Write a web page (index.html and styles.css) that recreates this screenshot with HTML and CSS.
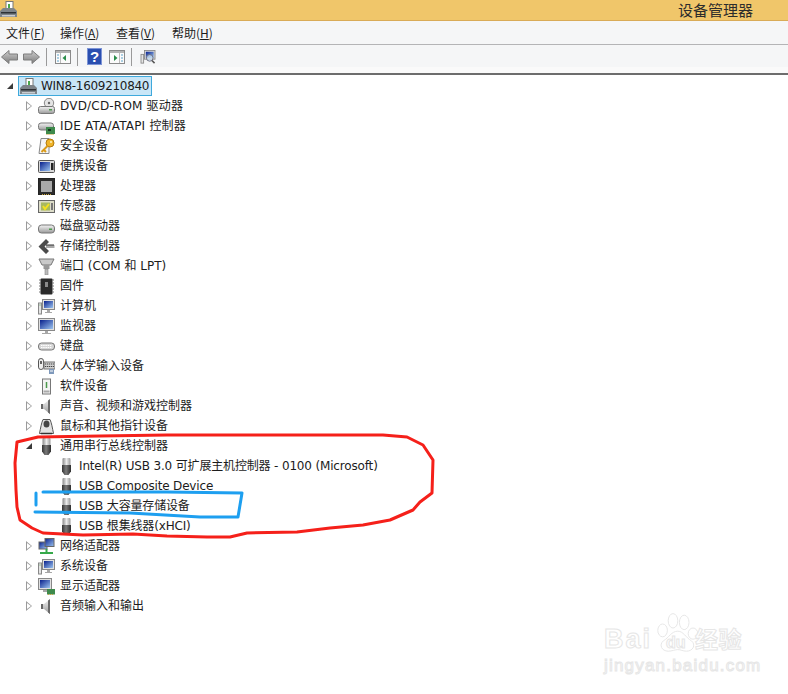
FILE: index.html
```html
<!DOCTYPE html>
<html lang="zh-CN">
<head>
<meta charset="utf-8">
<title>设备管理器</title>
<link rel="stylesheet" href="styles.css">
</head>
<body>
<svg class="defs" width="0" height="0" aria-hidden="true">
  <defs>
    <linearGradient id="metal" x1="0" y1="0" x2="0" y2="1"><stop offset="0" stop-color="#f4f4f4"/><stop offset="1" stop-color="#9a9a9a"/></linearGradient>
    <linearGradient id="arrow" x1="0" y1="0" x2="0" y2="1"><stop offset="0" stop-color="#cfcfcf"/><stop offset="1" stop-color="#7c7c7c"/></linearGradient>
    <linearGradient id="plug" x1="0" y1="0" x2="1" y2="0"><stop offset="0" stop-color="#8a8a8a"/><stop offset=".5" stop-color="#ececec"/><stop offset="1" stop-color="#9a9a9a"/></linearGradient>
    <linearGradient id="body" x1="0" y1="0" x2="1" y2="0"><stop offset="0" stop-color="#333"/><stop offset=".45" stop-color="#7a7a7a"/><stop offset="1" stop-color="#2e2e2e"/></linearGradient>
    <linearGradient id="screen" x1="0" y1="0" x2="1" y2="1"><stop offset="0" stop-color="#08208c"/><stop offset="1" stop-color="#9cc4f0"/></linearGradient>
    <symbol id="i-root" viewBox="0 0 17 17"><rect x="6" y="0.5" width="7" height="9" fill="#fff" stroke="#777"/><path d="M9 3v5" stroke="#4aa84a" stroke-width="2"/><path d="M3 7h11l3 3v6H0v-6z" fill="#7d8489"/><rect x="1" y="11" width="15" height="1.5" fill="#2d3236"/><rect x="2" y="14" width="13" height="1.5" fill="#c8ccd0"/></symbol>
    <symbol id="i-dvd" viewBox="0 0 17 17"><circle cx="11" cy="5" r="4.7" fill="#e4e4e4" stroke="#888"/><circle cx="11" cy="5" r="1.2" fill="#666"/><rect x="0.5" y="8.5" width="16" height="7" rx="2" fill="url(#metal)" stroke="#777"/><rect x="11" y="11" width="3" height="1.5" fill="#4c9a4c"/></symbol>
    <symbol id="i-ide" viewBox="0 0 17 17"><rect x="0.5" y="5" width="15" height="7" rx="2.5" fill="url(#metal)" stroke="#777"/><rect x="8" y="9" width="9" height="7" fill="#3e8a4c"/><path d="M9 16v1M11 16v1M13 16v1M15 16v1" stroke="#c9a53c"/><rect x="10" y="11" width="3" height="2" fill="#173a20"/></symbol>
    <symbol id="i-key" viewBox="0 0 17 17"><path d="M3 .5h8v15H1z" fill="#f4f4f4" stroke="#888"/><circle cx="12" cy="5" r="4" fill="#f0b428" stroke="#b07a10"/><circle cx="13" cy="4" r="1" fill="#fff2c0"/><path d="M10 7.500 3.500 14M6 12l2 2" stroke="#d99a18" stroke-width="2"/></symbol>
    <symbol id="i-portable" viewBox="0 0 17 17"><rect x="0.500" y="2.500" width="16" height="12" rx="1" fill="#d8d8d8" stroke="#555"/><rect x="2" y="4" width="10" height="9" fill="url(#screen)"/><rect x="13" y="5" width="2.500" height="7" fill="#222"/></symbol>
    <symbol id="i-cpu" viewBox="0 0 17 17"><rect x="0.500" y="0.500" width="16" height="16" fill="#2c2c2c" stroke="#222"/><rect x="3" y="3" width="11" height="11" fill="#a9a9a9"/><path d="M4 16.500h9" stroke="#c9a53c" stroke-dasharray="1 1"/></symbol>
    <symbol id="i-sensor" viewBox="0 0 17 17"><rect x="0.500" y="2.500" width="16" height="12" fill="#dcdcc8" stroke="#666"/><rect x="3" y="4.500" width="9" height="8" fill="#a8b860"/><path d="M5 8l2 3 4-5" stroke="#f2e020" stroke-width="2" fill="none"/><path d="M14 5v7" stroke="#777" stroke-width="2"/></symbol>
    <symbol id="i-disk" viewBox="0 0 17 17"><rect x="0.500" y="7" width="16" height="8" rx="3" fill="url(#metal)" stroke="#777"/><rect x="11" y="10.500" width="3" height="1.500" fill="#4c9a4c"/></symbol>
    <symbol id="i-storage" viewBox="0 0 17 17"><path d="M8 1 0.500 8.500 8 16l3-3-4.500-4.500L11 4z" fill="#4b4b4b"/><path d="M8 7h8.500v3H8z" fill="#a8a8a8"/><path d="M8 7h8" stroke="#333"/></symbol>
    <symbol id="i-port" viewBox="0 0 17 17"><path d="M1 1h15l-3 6H4z" fill="#c9c9c9" stroke="#777"/><rect x="5.500" y="7" width="6" height="4" fill="#999"/><rect x="7" y="11" width="3" height="6" fill="#bbb" stroke="#888" stroke-width=".6"/></symbol>
    <symbol id="i-firmware" viewBox="0 0 17 17"><rect x="2.500" y="0.500" width="12" height="16" rx="1" fill="#2a2a2a"/><path d="M1 2h2M1 5h2M1 8h2M1 11h2M1 14h2M14 2h2M14 5h2M14 8h2M14 11h2M14 14h2" stroke="#777"/><rect x="7" y="4" width="3" height="5" fill="#8a8a8a"/></symbol>
    <symbol id="i-computer" viewBox="0 0 17 17"><rect x="0.500" y="5" width="3" height="11" fill="#e4e4e4" stroke="#888"/><path d="M1.500 7h1" stroke="#4c9a4c"/><rect x="4.500" y="1.500" width="12" height="10" fill="#e0e0e0" stroke="#888"/><rect x="6" y="3" width="9" height="7" fill="url(#screen)"/><path d="M9 12h3v2h2v1H7v-1h2z" fill="#a8a8a8"/></symbol>
    <symbol id="i-monitor" viewBox="0 0 17 17"><rect x="0.500" y="0.500" width="16" height="12" fill="#e0e0e0" stroke="#888"/><rect x="2" y="2" width="13" height="9" fill="url(#screen)"/><path d="M7 13h3v2h3v1H4v-1h3z" fill="#a8a8a8"/></symbol>
    <symbol id="i-keyboard" viewBox="0 0 17 17"><rect x="0.500" y="5" width="16" height="7" rx="3" fill="#d6d6d6" stroke="#777"/><path d="M3 7.500h11M3 9.500h11" stroke="#fff" stroke-dasharray="1.500 .7"/></symbol>
    <symbol id="i-hid" viewBox="0 0 17 17"><rect x="0.500" y="0.500" width="5" height="11" rx="2.400" fill="#eee" stroke="#555"/><path d="M3 3v3" stroke="#333" stroke-width="1.500"/><rect x="6" y="4" width="11" height="7" fill="#d0d0d0" stroke="#777"/><path d="M7 6h9M7 8.500h9" stroke="#444" stroke-dasharray="1.300 .7"/><path d="M11 11h5v5h-5z" fill="#7f99bb"/><path d="M12 13h3" stroke="#fff"/></symbol>
    <symbol id="i-soft" viewBox="0 0 17 17"><rect x="4.500" y="1" width="8" height="15" fill="#f4f4f4" stroke="#777"/><path d="M8.500 4v6" stroke="#4c9a4c" stroke-width="1.500"/><rect x="5.500" y="12.500" width="6" height="2" fill="#aaa"/></symbol>
    <symbol id="i-sound" viewBox="0 0 17 17"><path d="M3 6h3l6-5v15L6 11H3z" fill="url(#metal)"/><path d="M10 2.500v12l2 1.500V1z" fill="#6a6a6a"/><rect x="3" y="6" width="2" height="5" fill="#666"/></symbol>
    <symbol id="i-mouse" viewBox="0 0 17 17"><path d="M5 1.500h7c1.500 3 2.500 9 3.500 14h-14c1-5 2-11 3.500-14z" fill="#e2e2e2" stroke="#555"/><ellipse cx="8.500" cy="6" rx="3" ry="3.500" fill="#444"/><path d="M3 15.500h11" stroke="#333" stroke-width="1.500"/></symbol>
    <symbol id="i-usb" viewBox="0 0 17 17"><path d="M4.500 1q0-1 1-1h6q1 0 1 1v6h-8z" fill="url(#plug)"/><path d="M4 7h9v6.500L10.500 17h-4L4 13.500z" fill="url(#body)"/></symbol>
    <symbol id="i-net" viewBox="0 0 17 17"><rect x="1" y="4" width="8" height="7" fill="url(#screen)" stroke="#666"/><rect x="7" y="0.500" width="9" height="8" fill="url(#screen)" stroke="#666"/><path d="M8.500 11v3M2 15h13" stroke="#36a94a" stroke-width="2"/></symbol>
    <symbol id="i-display" viewBox="0 0 17 17"><rect x="0.500" y="0.500" width="13" height="11" fill="#e0e0e0" stroke="#888"/><rect x="2" y="2" width="10" height="8" fill="url(#screen)"/><path d="M5 12h4v2H5z" fill="#a8a8a8"/><rect x="9" y="11" width="8" height="5.500" fill="#3e8a4c"/><path d="M10 16.500h6" stroke="#c9a53c" stroke-dasharray="1 1"/></symbol>
    <symbol id="i-back" viewBox="0 0 17 16"><path d="M.5 8 8 1.500V5h8.500v6H8v3.500z" fill="url(#arrow)" stroke="#7d7d7d"/></symbol>
    <symbol id="i-forward" viewBox="0 0 17 16"><path d="M16.500 8 9 1.500V5H.5v6H9v3.500z" fill="url(#arrow)" stroke="#7d7d7d"/></symbol>
    <symbol id="i-win-left" viewBox="0 0 16 14"><rect x="0.500" y="0.500" width="15" height="13" fill="#fbfbfb" stroke="#8a8a8a"/><rect x="1" y="1" width="14" height="2" fill="#b3b3b3"/><path d="M5.500 3v10" stroke="#bbb"/><path d="M2 5h2M2 8h2M2 11h2" stroke="#5fa3c9"/><path d="M11 5v6L7.500 8z" fill="#2b8c4a"/></symbol>
    <symbol id="i-win-right" viewBox="0 0 16 14"><rect x="0.500" y="0.500" width="15" height="13" fill="#fbfbfb" stroke="#8a8a8a"/><rect x="1" y="1" width="14" height="2" fill="#b3b3b3"/><path d="M10.500 3v10" stroke="#bbb"/><path d="M12 5h2M12 8h2M12 11h2" stroke="#5fa3c9"/><path d="M5 5v6L8.500 8z" fill="#2b8c4a"/></symbol>
    <symbol id="i-scan" viewBox="0 0 17 16"><rect x="0.500" y="5" width="3" height="10" fill="#e4e4e4" stroke="#888"/><rect x="4.500" y="0.500" width="12" height="10" fill="#dcdcdc" stroke="#888"/><rect x="6" y="2" width="9" height="7" fill="url(#screen)"/><circle cx="10.500" cy="9" r="3.800" fill="#cde4f5" fill-opacity=".7" stroke="#667"/><path d="M13 12l3 3" stroke="#555" stroke-width="1.800"/></symbol>
  </defs>
</svg>

<header class="titlebar">
  <svg class="icon title-icon"><use href="#i-root"/></svg>
  <div class="title">设备管理器</div>
</header>

<nav class="menubar">
  <span class="menu">文件(<u>F</u>)</span>
  <span class="menu">操作(<u>A</u>)</span>
  <span class="menu">查看(<u>V</u>)</span>
  <span class="menu">帮助(<u>H</u>)</span>
</nav>

<div class="toolbar">
  <svg class="tool arrow"><use href="#i-back"/></svg>
  <svg class="tool arrow"><use href="#i-forward"/></svg>
  <i class="sep"></i>
  <svg class="tool win"><use href="#i-win-left"/></svg>
  <i class="sep"></i>
  <span class="help"><span class="help-mark">?</span></span>
  <svg class="tool win"><use href="#i-win-right"/></svg>
  <i class="sep"></i>
  <svg class="tool win"><use href="#i-scan"/></svg>
</div>

<main class="tree">
  <div class="row root">
    <b class="open"></b>
    <div class="selected"><svg class="icon"><use href="#i-root"/></svg><span>WIN8-1609210840</span></div>
  </div>
  <div class="row wide"><b class="closed"></b><svg class="icon"><use href="#i-dvd"/></svg><span>DVD/CD-ROM 驱动器</span></div>
  <div class="row wide"><b class="closed"></b><svg class="icon"><use href="#i-ide"/></svg><span>IDE ATA/ATAPI 控制器</span></div>
  <div class="row"><b class="closed"></b><svg class="icon"><use href="#i-key"/></svg><span>安全设备</span></div>
  <div class="row"><b class="closed"></b><svg class="icon"><use href="#i-portable"/></svg><span>便携设备</span></div>
  <div class="row"><b class="closed"></b><svg class="icon"><use href="#i-cpu"/></svg><span>处理器</span></div>
  <div class="row"><b class="closed"></b><svg class="icon"><use href="#i-sensor"/></svg><span>传感器</span></div>
  <div class="row"><b class="closed"></b><svg class="icon"><use href="#i-disk"/></svg><span>磁盘驱动器</span></div>
  <div class="row"><b class="closed"></b><svg class="icon"><use href="#i-storage"/></svg><span>存储控制器</span></div>
  <div class="row"><b class="closed"></b><svg class="icon"><use href="#i-port"/></svg><span>端口 (COM 和 LPT)</span></div>
  <div class="row"><b class="closed"></b><svg class="icon"><use href="#i-firmware"/></svg><span>固件</span></div>
  <div class="row"><b class="closed"></b><svg class="icon"><use href="#i-computer"/></svg><span>计算机</span></div>
  <div class="row"><b class="closed"></b><svg class="icon"><use href="#i-monitor"/></svg><span>监视器</span></div>
  <div class="row"><b class="closed"></b><svg class="icon"><use href="#i-keyboard"/></svg><span>键盘</span></div>
  <div class="row"><b class="closed"></b><svg class="icon"><use href="#i-hid"/></svg><span>人体学输入设备</span></div>
  <div class="row"><b class="closed"></b><svg class="icon"><use href="#i-soft"/></svg><span>软件设备</span></div>
  <div class="row"><b class="closed"></b><svg class="icon"><use href="#i-sound"/></svg><span>声音、视频和游戏控制器</span></div>
  <div class="row"><b class="closed"></b><svg class="icon"><use href="#i-mouse"/></svg><span>鼠标和其他指针设备</span></div>
  <div class="row"><b class="open"></b><svg class="icon"><use href="#i-usb"/></svg><span>通用串行总线控制器</span></div>
  <div class="row child"><svg class="icon"><use href="#i-usb"/></svg><span>Intel(R) USB 3.0 可扩展主机控制器 - 0100 (Microsoft)</span></div>
  <div class="row child"><svg class="icon"><use href="#i-usb"/></svg><span>USB Composite Device</span></div>
  <div class="row child"><svg class="icon"><use href="#i-usb"/></svg><span>USB 大容量存储设备</span></div>
  <div class="row child"><svg class="icon"><use href="#i-usb"/></svg><span>USB 根集线器(xHCI)</span></div>
  <div class="row"><b class="closed"></b><svg class="icon"><use href="#i-net"/></svg><span>网络适配器</span></div>
  <div class="row"><b class="closed"></b><svg class="icon"><use href="#i-computer"/></svg><span>系统设备</span></div>
  <div class="row"><b class="closed"></b><svg class="icon"><use href="#i-display"/></svg><span>显示适配器</span></div>
  <div class="row"><b class="closed"></b><svg class="icon"><use href="#i-sound"/></svg><span>音频输入和输出</span></div>
</main>

<svg class="marks" viewBox="0 0 788 694" aria-hidden="true">
  <path class="red" d="M263 435 167 435 100 436 38 437 17 442 15 463 16 490 17 507 20 520 32 528 43 533 83 535 133 534 167 536 207 537 230 537 247 533 297 532 330 528 363 525 390 520 413 510 420 502 432 493 433 460 423 445 407 437 383 435Z"/>
  <path class="blue" d="M36 493V505M35 512 130 513 200 517 238 517 242 493 167 492 43 492"/>
</svg>

<div class="watermark">
  <svg class="paw" viewBox="0 0 60 50" aria-hidden="true">
    <ellipse cx="12" cy="23" rx="6" ry="8"/><ellipse cx="25" cy="11" rx="6" ry="9"/><ellipse cx="39" cy="13" rx="6" ry="9"/><ellipse cx="50" cy="27" rx="6" ry="7"/>
    <path d="M31 24c7 0 10 8 17 12 6 5 2 13-6 13-5 0-7-2-11-2s-7 2-12 2c-8 0-12-8-6-13 7-4 10-12 18-12z"/>
  </svg>
  <div class="wm-line"><span class="wm-bai">Bai</span><span class="wm-du">du</span><span class="wm-jy">经验</span></div>
  <div class="wm-url">jingyan.baidu.com</div>
</div>
</body>
</html>
```
FILE: styles.css
```css
* { box-sizing: border-box; }
html, body { margin: 0; padding: 0; }
body {
  position: relative;
  width: 788px;
  height: 694px;
  overflow: hidden;
  background: #fff;
  color: #1c1c1c;
  font: 12px/20px "DejaVu Sans", "Noto Sans CJK SC", sans-serif;
}
.defs { position: absolute; }
.icon { width: 17px; height: 17px; flex: none; display: block; }

.titlebar {
  height: 21px;
  display: flex;
  align-items: flex-start;
  background: #f0c66a;
  border-bottom: 1px solid #d9ab57;
}
.title-icon { margin-top: 1px; margin-left: 0; }
.title {
  margin-left: auto;
  margin-right: 35px;
  font-family: "Noto Sans CJK SC", sans-serif;
  font-size: 15px;
  line-height: 19px;
  color: #2c2c2c;
}

.menubar {
  height: 24px;
  display: flex;
  gap: 17px;
  padding: 2px 0 0 6px;
  background: #f5f6f7;
  border-bottom: 1px solid #b4b4b6;
  font-family: "Noto Sans CJK SC", sans-serif;
}
.menu { line-height: 20px; width: 37px; white-space: nowrap; }
.menu u { text-underline-offset: 1px; }
.menu:nth-child(3) { width: 39px; }
.menu:nth-child(2) { width: 39px; }

.toolbar {
  height: 30px;
  display: flex;
  align-items: center;
  padding: 1px 0 6px 1px;
  background: linear-gradient(#f5f6f7 0 22px, #fafafa 22px);
  border-bottom: 2px solid #6d6d6d;
}
.tool { display: block; flex: none; }
.arrow { width: 17px; height: 16px; margin-right: 5px; }
.arrow + .arrow { margin-right: 6px; }
.win { width: 16px; height: 14px; }
.sep { display: block; width: 1px; height: 18px; background: #9a9a9a; margin: 0 8px 0 0; flex: none; }
.toolbar .win { margin-right: 6px; }
.help {
  display: block;
  width: 15px;
  height: 17px;
  margin: 0 7px 0 1px;
  background: #2a4fb0;
  border: 1px solid #7d94d6;
  text-align: center;
  flex: none;
}
.help-mark {
  display: block;
  color: #fff;
  font: bold 15px/15px "Liberation Sans", sans-serif;
}

.tree { padding-top: 1px; }
.row {
  height: 20px;
  display: flex;
  align-items: center;
  padding-left: 26px;
  white-space: nowrap;
}
.row > .icon { margin-left: 12px; }
.row > span { margin-left: 5px; }
.wide > span { letter-spacing: .2px; }
.closed {
  display: block;
  width: 0;
  height: 0;
  flex: none;
  margin-right: -6px;
  position: relative;
  border-style: solid;
  border-width: 5px 0 5px 6px;
  border-color: transparent transparent transparent #9b9b9b;
}
.closed::after {
  content: "";
  position: absolute;
  left: -5px;
  top: -3.500px;
  border-style: solid;
  border-width: 3.500px 0 3.500px 4px;
  border-color: transparent transparent transparent #fff;
}
.open {
  display: block;
  width: 0;
  height: 0;
  flex: none;
  margin-right: -6px;
  border-style: solid;
  border-width: 0 0 6px 6px;
  border-color: transparent transparent #3a3a3a transparent;
}
.root { padding-left: 7px; }
.selected {
  height: 20px;
  width: 134px;
  margin-left: 11px;
  display: flex;
  align-items: center;
  padding-left: 1px;
  background: #c9e6f7;
  border: 1px solid #3fa9dc;
}
.selected span { margin-left: 4px; letter-spacing: -.3px; }
.child { padding-left: 46px; }
.child > .icon { margin-left: 12px; width: 17px; }
.child > span { margin-left: 4px; letter-spacing: -.16px; }

.marks { position: absolute; left: 0; top: 0; width: 788px; height: 694px; pointer-events: none; }
.red, .blue { fill: none; stroke-linejoin: round; stroke-linecap: round; stroke-width: 3px; }
.red { stroke: #f5201a; }
.blue { stroke: #1d9ff0; }

.watermark {
  position: absolute;
  left: 604px;
  top: 610px;
  width: 170px;
  color: #fff;
  -webkit-text-stroke: 1px #e6e6e6;
  font-family: "Liberation Sans", "Noto Sans CJK SC", sans-serif;
}
.paw {
  position: absolute;
  left: 49px;
  top: 0;
  width: 48px;
  height: 44px;
  fill: #fff;
  stroke: #e6e6e6;
  stroke-width: 1.200;
}
.wm-line {
  position: relative;
  display: flex;
  align-items: baseline;
  height: 34px;
  padding-top: 17px;
  font-weight: bold;
  font-size: 27px;
  line-height: 24px;
}
.wm-bai { letter-spacing: 2px; width: 62px; }
.wm-du { font-size: 16px; width: 29px; }
.wm-jy { font-size: 23px; letter-spacing: .5px; }
.wm-url { margin-top: 13px; font-size: 17px; line-height: 18px; letter-spacing: 1.200px; }
```
